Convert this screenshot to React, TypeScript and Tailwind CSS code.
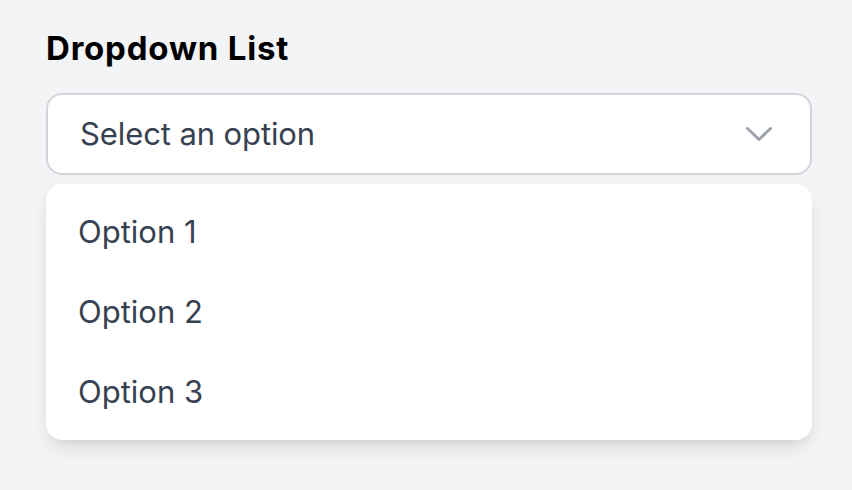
import { useState } from 'react';

const options = ['Option 1', 'Option 2', 'Option 3'];

export default function App() {
  const [selected, setSelected] = useState<string | null>(null);
  const [open, setOpen] = useState(true);

  return (
    <div
      className="min-h-screen bg-[#f3f4f6] pl-[46px] pt-[28px]"
      style={{ fontFamily: 'Inter, "Noto Sans", sans-serif' }}
    >
      <div className="w-[766px]">
        <h2 className="text-[33px] leading-[40px] font-bold text-black tracking-[0.8px]">Dropdown List</h2>
        <button
          type="button"
          onClick={() => setOpen(!open)}
          className="mt-[25px] flex h-[82px] w-full items-center justify-between rounded-[16px] border-2 border-[#d1d5db] bg-white pl-[32px] pr-[37px] text-left"
        >
          <span className="text-[31px] tracking-[-0.1px] text-[#374151]">{selected ?? 'Select an option'}</span>
          <svg width="28" height="16" viewBox="0 0 28 16" fill="none">
            <path d="M2.5 2.5 L14 13.5 L25.5 2.5" stroke="#9ca3af" strokeWidth="3" strokeLinecap="round" strokeLinejoin="round" />
          </svg>
        </button>
        {open && (
          <ul className="mt-[9px] rounded-[16px] bg-white py-[8px] shadow-[0_10px_20px_-4px_rgba(0,0,0,0.12),0_4px_8px_-4px_rgba(0,0,0,0.08)]">
            {options.map((opt) => (
              <li
                key={opt}
                onClick={() => {
                  setSelected(opt);
                  setOpen(false);
                }}
                className="flex h-[80px] cursor-pointer items-center px-[32px] text-[31px] text-[#374151] hover:bg-gray-100"
              >
                {opt}
              </li>
            ))}
          </ul>
        )}
      </div>
    </div>
  );
}
